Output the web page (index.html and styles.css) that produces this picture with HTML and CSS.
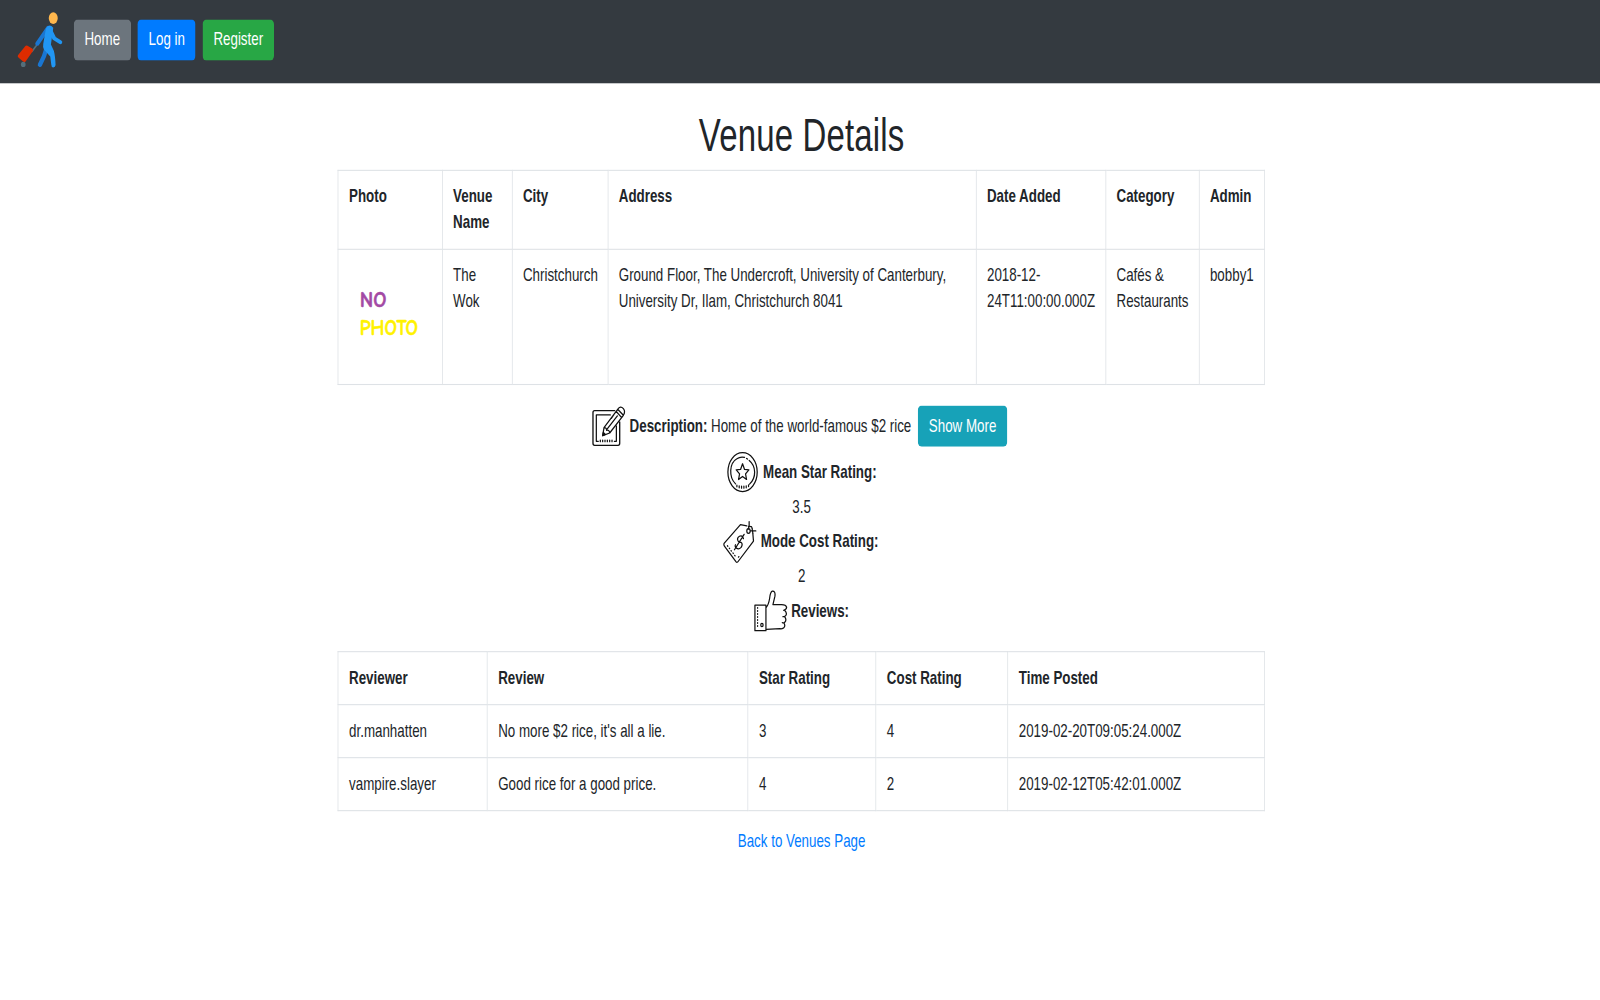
FILE: index.html
```html
<!DOCTYPE html>
<html lang="en">
<head>
<meta charset="utf-8">
<title>Venue Details</title>
<link rel="stylesheet" href="styles.css">
</head>
<body>
<div class="viewport">
<div class="page">
  <nav class="navbar">
    <svg class="logo" viewBox="45 30 150 180" preserveAspectRatio="none" fill="none" stroke-linecap="round" stroke-linejoin="round">
      <path d="M109 138L96 155" stroke="#546e7a" stroke-width="5"/>
      <path d="M145 84L112 132" stroke="#1976d2" stroke-width="12"/>
      <path d="M140 145L132 170L120 195" stroke="#1976d2" stroke-width="13"/>
      <path d="M151 92L163 116L181 127" stroke="#2196f3" stroke-width="12"/>
      <path d="M138 86Q148 70 160 84L153 134L162 154Q166 170 167 196Q166 203 160 203Q154 202 154 194L151 170L132 149Q128 144 130 132Z" fill="#2196f3"/>
      <ellipse cx="160" cy="55" rx="13.500" ry="17.500" fill="#ffb74d"/>
      <ellipse cx="70" cy="194" rx="7" ry="8" fill="#546e7a"/>
      <path d="M80 143L94 151L73 181L59 169Z" fill="#dd2c00" stroke="#dd2c00" stroke-width="11"/>
    </svg>
    <a class="btn btn-secondary">Home</a>
    <a class="btn btn-primary">Log in</a>
    <a class="btn btn-success">Register</a>
  </nav>
  <main class="container">
    <h1>Venue Details</h1>
    <table>
      <colgroup><col class="c-photo"><col class="c-name"><col class="c-city"><col class="c-address"><col class="c-date"><col class="c-category"><col class="c-admin"></colgroup>
      <thead><tr><th>Photo</th><th>Venue Name</th><th>City</th><th>Address</th><th>Date Added</th><th>Category</th><th>Admin</th></tr></thead>
      <tbody><tr>
        <td><svg class="photo" viewBox="0 0 100 100" preserveAspectRatio="none" stroke-width=".5">
          <text x="12.500" y="40.500" textLength="32" lengthAdjust="spacingAndGlyphs" fill="#a349a4" stroke="#a349a4">NO</text>
          <text x="12.500" y="67" textLength="70" lengthAdjust="spacingAndGlyphs" fill="#fff200" stroke="#fff200">PHOTO</text>
        </svg></td>
        <td>The Wok</td><td>Christchurch</td><td>Ground Floor, The Undercroft, University of Canterbury, University Dr, Ilam, Christchurch 8041</td><td>2018-12-24T11:00:00.000Z</td><td>Cafés &amp; Restaurants</td><td>bobby1</td>
      </tr></tbody>
    </table>
    <section class="facts">
      <div class="fact description">
        <svg class="icon icon-note" viewBox="36 33 102 123" preserveAspectRatio="none">
          <path d="M104 48H44Q39 48 39 54V146Q39 152 44 152H114Q119 152 119 146V82" stroke-width="4"/>
          <path d="M91 61H49V140H55M103 140H109V94M61 136V141M68 136V141M75 136V141M82 136V141M89 136V141M96 136V141"/>
          <path d="M68 123L72 99L113 44Q121 32 130 42Q137 51 130 62L89 115ZM72 99Q79 98 80 107Q88 105 89 115M108 50L125 69M113 44L130 62M80 105L112 64M101 61L94 71M68 123L74 119"/>
          <path d="M68 123L70 113L76 119Z" fill="#111"/>
        </svg>
        <strong>Description:</strong><span>Home of the world-famous $2 rice</span>
        <a class="btn btn-info">Show More</a>
      </div>
      <div class="fact">
        <svg class="icon icon-star" viewBox="48 20 99 126" preserveAspectRatio="none">
          <ellipse cx="97" cy="83" rx="44" ry="58"/>
          <path d="M76 118C55 98 57 56 80 43Q90 36 103 39M109 42L112 44M117 48C138 65 139 99 118 119M80 122V127M87 124V130M94 125V131M101 125V131M108 124V130M115 121V126"/>
          <path d="M97 58L103 75L116 76L106 88L109 105L97 96L85 105L88 88L78 76L91 75Z"/>
        </svg>
        <strong>Mean Star Rating:</strong>
      </div>
      <div class="value">3.5</div>
      <div class="fact fact-cost">
        <svg class="icon icon-tag" viewBox="42 225 102 129" preserveAspectRatio="none">
          <path d="M113 242L94 238L45 294Q43 298 46 302L81 349Q84 352 87 348L133 287L131 264M118 243L127 244L129 249"/>
          <ellipse cx="118" cy="257" rx="5" ry="7"/>
          <path d="M120 229V242L117 252M124 257H140M129 250L131 263"/>
          <path d="M103 280Q99 268 91 273Q82 279 87 287Q90 291 96 291Q102 296 96 306Q87 315 79 305Q77 301 79 298M105 267L76 313"/>
          <path d="M55 301L80 334M88 335L91 331" stroke-dasharray="2 7"/>
        </svg>
        <strong>Mode Cost Rating:</strong>
      </div>
      <div class="value">2</div>
      <div class="fact fact-reviews">
        <svg class="icon icon-thumb" viewBox="130 432 105 129" preserveAspectRatio="none">
          <path d="M169 479H136V555H169M169 479V555M169 487Q177 478 180 459Q182 439 188 437Q198 436 196 452L190 477H216Q229 477 231 485Q231 492 222 494M225 494Q233 502 229 509Q227 514 220 513M225 513Q232 522 226 529Q224 533 218 531M223 532Q228 540 223 546Q220 550 211 549L170 551"/>
          <path d="M144 486V549" stroke-dasharray="2 7"/>
          <ellipse cx="157" cy="538" rx="3.500" ry="5"/>
        </svg>
        <strong>Reviews:</strong>
      </div>
    </section>
    <table>
      <colgroup><col class="c-reviewer"><col class="c-review"><col class="c-stars"><col class="c-cost"><col class="c-time"></colgroup>
      <thead><tr><th>Reviewer</th><th>Review</th><th>Star Rating</th><th>Cost Rating</th><th>Time Posted</th></tr></thead>
      <tbody>
        <tr><td>dr.manhatten</td><td>No more $2 rice, it's all a lie.</td><td>3</td><td>4</td><td>2019-02-20T09:05:24.000Z</td></tr>
        <tr><td>vampire.slayer</td><td>Good rice for a good price.</td><td>4</td><td>2</td><td>2019-02-12T05:42:01.000Z</td></tr>
      </tbody>
    </table>
    <a class="back">Back to Venues Page</a>
  </main>
</div>
</div>
</body>
</html>
```
FILE: styles.css
```css
*, *::before, *::after { box-sizing: border-box; }
html, body { margin: 0; background: #fff; }
.viewport { width: 1600px; height: 1000px; overflow: clip; contain: paint; }
.page {
  width: 2037.900px;
  height: 924px;
  transform: scale(.78512, 1.0816);
  transform-origin: 0 0;
  font: 17px/24px "Liberation Sans", Arial, sans-serif;
  color: #212529;
}
.navbar {
  display: flex;
  align-items: center;
  gap: 8.500px;
  height: 76.500px;
  padding: 0 19px 2.500px;
  background: #343a40;
}
.logo { width: 63.700px; height: 55.500px; margin-right: 2.500px; }
.btn {
  display: inline-block;
  padding: 6px 12.900px;
  border: 1px solid transparent;
  border-radius: 5px / 4.500px;
  color: #fff;
  white-space: nowrap;
}
.btn-secondary { background: #6c757d; }
.btn-primary { background: #007bff; }
.btn-success { background: #28a745; }
.btn-info { background: #17a2b8; margin-left: 4px; }
.container { width: 1182px; margin: 0 0 0 430px; padding-top: 24px; }
h1 { margin: 0 0 8px; padding-top: 1px; font-size: 42px; letter-spacing: .2px; font-weight: 500; line-height: 47px; text-align: center; }
table { width: 1180px; table-layout: fixed; border-collapse: collapse; }
th, td { padding: 12px 8px 12px 13.600px; border: 1px solid #dee2e6; text-align: left; vertical-align: top; }
.c-photo { width: 132.500px; }
.c-name { width: 89px; }
.c-city { width: 122px; }
.c-address { width: 469px; }
.c-date { width: 165px; }
.c-category { width: 119px; }
.c-admin { width: 83.500px; }
.c-reviewer { width: 190px; }
.c-review { width: 332px; }
.c-stars { width: 163px; }
.c-cost { width: 168px; }
.c-time { width: 327px; }
.photo { display: block; width: 106px; height: 100px; font: 600 20.500px "Comic Neue", "Comic Sans MS", Lato, sans-serif; }
.facts { padding: 19.500px 0 17px; }
.fact { display: flex; align-items: center; justify-content: center; gap: 4.500px; height: 40px; }
.description { height: 38px; margin: 0 5px 3.500px 0; }
.description strong, .description span { margin-bottom: 1px; }
.fact-cost, .fact-reviews { gap: 4px; margin-right: 1.500px; }
.value { text-align: center; }
.icon { flex: none; fill: none; stroke: #111; stroke-width: 3.700; stroke-linecap: round; stroke-linejoin: round; }
.icon-note { width: 43.400px; height: 38px; }
.icon-star { width: 42px; height: 39px; }
.icon-tag { width: 43.400px; height: 40px; }
.icon-thumb { width: 44.600px; height: 40px; }
.back { display: block; margin-top: 16px; color: #007bff; text-align: center; }
```
